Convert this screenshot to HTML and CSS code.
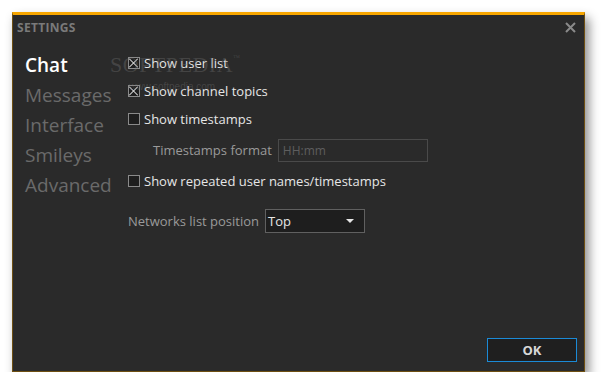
FILE: index.html
```html
<!DOCTYPE html>
<html>
<head>
  <meta charset="utf-8">
  <title>Settings</title>
  <link rel="stylesheet" href="styles.css">
</head>
<body>
  <div class="window">
    <div class="title-bar">
      <span class="title">SETTINGS</span>
      <span class="close">
        <svg width="11" height="11" viewBox="0 0 11 11"><path d="M1 1L10 10M10 1L1 10" stroke="#8a8a8a" stroke-width="2"/></svg>
      </span>
    </div>

    <div class="body">
      <ul class="nav">
        <li class="active">Chat</li>
        <li>Messages</li>
        <li>Interface</li>
        <li>Smileys</li>
        <li>Advanced</li>
      </ul>

      <div class="options">
        <label class="check-row first"><span class="box checked"></span>Show user list</label>
        <label class="check-row"><span class="box checked"></span>Show channel topics</label>
        <label class="check-row"><span class="box"></span>Show timestamps</label>
        <div class="field-row indent">
          <span class="field-label">Timestamps format</span>
          <span class="input">HH:mm</span>
        </div>
        <label class="check-row"><span class="box"></span>Show repeated user names/timestamps</label>
        <div class="field-row networks">
          <span class="field-label">Networks list position</span>
          <span class="select">Top<span class="arrow"></span></span>
        </div>
      </div>
    </div>

    <div class="footer">
      <button class="ok">OK</button>
    </div>

    <!-- watermark -->
    <div class="mark">SOFTPEDIA<sup>™</sup></div>
    <div class="mark-url">www.softpedia.com</div>
  </div>
</body>
</html>
```

FILE: styles.css
```css
* {
  margin: 0;
  padding: 0;
  box-sizing: border-box;
}

body {
  background: #ffffff;
  font-family: "Open Sans", "Noto Sans", sans-serif;
  padding: 12px 0 0 12px;
}

.window {
  position: relative;
  width: 573px;
  height: 360px;
  background: #2a2a2a;
  border: 1px solid #6e4f12;
  border-top: 3px solid #f7a600;
  box-shadow: 4px 6px 10px rgba(0, 0, 0, 0.45);
  display: flex;
  flex-direction: column;
}

.title-bar {
  display: flex;
  justify-content: space-between;
  align-items: center;
  height: 24px;
  padding: 0 8px 0 4px;
}

.title {
  color: #7a7a7a;
  font-size: 12px;
  font-weight: 700;
  letter-spacing: 0.3px;
}

.close {
  display: flex;
  margin-top: 1px;
}

.body {
  display: flex;
  flex: 1;
  padding-top: 8px;
}

.nav {
  list-style: none;
  width: 115px;
  padding: 3px 0 0 12px;
}

.nav li {
  font-size: 19px;
  line-height: 30px;
  color: #6a6a6a;
}

.nav li.active {
  color: #ffffff;
  font-weight: 600;
}

.options {
  display: flex;
  flex-direction: column;
  padding-top: 2px;
}

.check-row {
  display: flex;
  align-items: center;
  height: 28px;
  font-size: 13px;
  color: #e6e6e6;
}

.box {
  width: 12px;
  height: 12px;
  border: 1px solid #8a8a8a;
  background: #1e1e1e;
  margin-right: 4px;
  position: relative;
}

.box.checked::before,
.box.checked::after {
  content: "";
  position: absolute;
  left: 4px;
  top: -1px;
  width: 1px;
  height: 12px;
  background: #e6e6e6;
}

.box.checked::before {
  transform: rotate(45deg);
}

.box.checked::after {
  transform: rotate(-45deg);
}

.field-row {
  display: flex;
  align-items: center;
  height: 34px;
}

.field-row.indent {
  padding-left: 25px;
}

.field-label {
  color: #9a9a9a;
  font-size: 13px;
  margin-right: 6px;
}

.input {
  width: 150px;
  height: 23px;
  border: 1px solid #4a4a4a;
  background: #2a2a2a;
  color: #5e5e5e;
  font-size: 12px;
  padding-left: 4px;
  line-height: 21px;
}

.field-row.networks {
  margin-top: 9px;
}

.select {
  position: relative;
  width: 100px;
  height: 24px;
  border: 1px solid #606060;
  background: #1e1e1e;
  color: #e6e6e6;
  font-size: 13px;
  padding-left: 2px;
  line-height: 22px;
}

.arrow {
  position: absolute;
  right: 10px;
  top: 9px;
  border-left: 4px solid transparent;
  border-right: 4px solid transparent;
  border-top: 4px solid #e6e6e6;
}

.footer {
  display: flex;
  justify-content: flex-end;
  padding: 0 7px 9px 0;
}

.ok {
  width: 90px;
  height: 24px;
  background: #1f1f1f;
  border: 1px solid #1b8ad6;
  color: #d8d8d8;
  font-family: "Open Sans", "Noto Sans", sans-serif;
  font-size: 13px;
  font-weight: 700;
}

.mark {
  position: absolute;
  left: 97px;
  top: 37px;
  font-family: "Liberation Serif", serif;
  font-size: 22px;
  letter-spacing: 0.5px;
  color: rgba(120, 120, 120, 0.35);
}

.mark sup {
  font-size: 7px;
  vertical-align: 12px;
}

.mark-url {
  position: absolute;
  left: 116px;
  top: 66px;
  font-family: "Liberation Sans", sans-serif;
  font-size: 10px;
  color: rgba(120, 120, 120, 0.35);
}
```
